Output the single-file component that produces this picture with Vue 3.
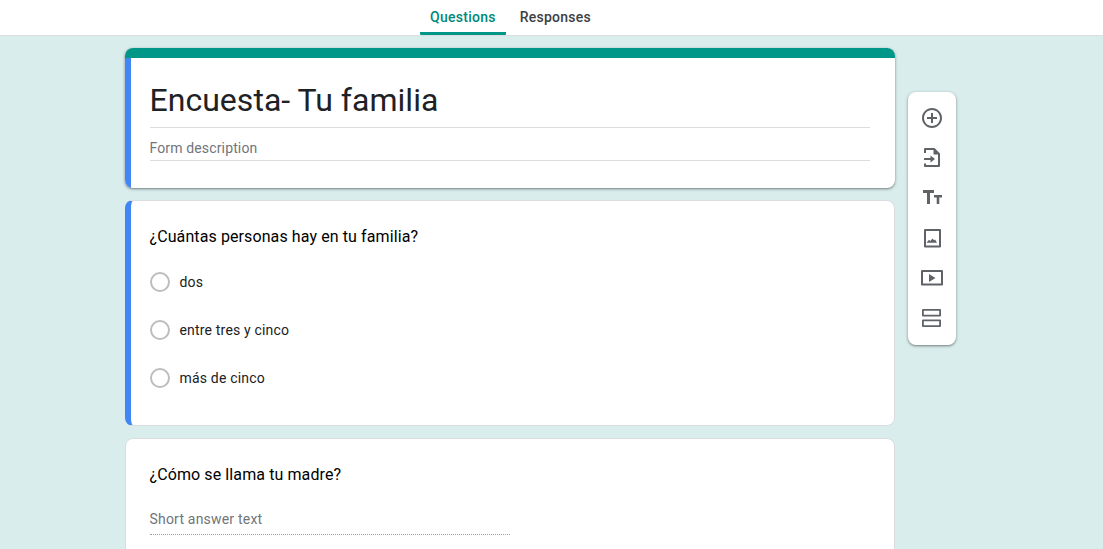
<script setup>
const options = ['dos', 'entre tres y cinco', 'más de cinco']
</script>

<template>
  <div class="page">
    <header class="tabs">
      <div class="tab active">Questions</div>
      <div class="tab">Responses</div>
    </header>
    <div class="stage">
      <main class="column">
        <section class="card title-card">
          <div class="teal"></div>
          <div class="title-body">
            <h1 class="title">Encuesta- Tu familia</h1>
            <div class="desc">Form description</div>
          </div>
        </section>
        <section class="card q-card selected">
          <div class="question">¿Cuántas personas hay en tu familia?</div>
          <div v-for="o in options" :key="o" class="option">
            <span class="radio"></span>
            <span class="label">{{ o }}</span>
          </div>
        </section>
        <section class="card q-card last">
          <div class="question">¿Cómo se llama tu madre?</div>
          <div class="short">Short answer text</div>
        </section>
      </main>
      <aside class="tools">
        <svg viewBox="0 0 24 24" class="ico"><path d="M13 7h-2v4H7v2h4v4h2v-4h4v-2h-4V7zm-1-5C6.480 2 2 6.480 2 12s4.480 10 10 10 10-4.480 10-10S17.520 2 12 2zm0 18c-4.410 0-8-3.590-8-8s3.590-8 8-8 8 3.590 8 8-3.590 8-8 8z"/></svg>
        <svg viewBox="0 0 24 24" class="ico"><path d="M5 2h9.500L20 7.500V20a1 1 0 0 1-1 1H5a1 1 0 0 1-1-1v-2.500h2V19h12V8.500h-4.500V4H6v3H4V3a1 1 0 0 1 1-1z"/><path d="M4 12h6.500V9.500l4.500 3.500-4.500 3.500V14H4z"/></svg>
        <svg viewBox="0 0 24 24" class="ico"><path d="M3 4h11v3h-4v11H7V7H3z"/><path d="M14 9h8v2.600h-2.700V18h-2.600v-6.400H14z"/></svg>
        <svg viewBox="0 0 24 24" class="ico"><path d="M5 3h15a1 1 0 0 1 1 1v16.500a1 1 0 0 1-1 1H5a1 1 0 0 1-1-1V4a1 1 0 0 1 1-1zm1 2v14.500h13V5z"/><path d="M6.500 16.800l2.500-3 1.300 1.200 2.200-2.500 1.600 1.800 1-.8 1.900 3.300z"/></svg>
        <svg viewBox="0 0 24 24" class="ico"><path d="M2 4h20a1 1 0 0 1 1 1v13.500a1 1 0 0 1-1 1H2a1 1 0 0 1-1-1V5a1 1 0 0 1 1-1zm1 2v11.500h18V6z"/><path d="M9 8l6.500 4L9 16z"/></svg>
        <svg viewBox="0 0 24 24" class="ico"><path d="M3 3h17a1 1 0 0 1 1 1v5.500a1 1 0 0 1-1 1H3a1 1 0 0 1-1-1V4a1 1 0 0 1 1-1zm.8 1.800v4h15.400v-4zM3 13.500h17a1 1 0 0 1 1 1V20a1 1 0 0 1-1 1H3a1 1 0 0 1-1-1v-5.500a1 1 0 0 1 1-1zm.8 1.800v4h15.400v-4z"/></svg>
      </aside>
    </div>
  </div>
</template>

<style>
html, body { margin: 0; background: #d9eeec; overflow: hidden; }
</style>

<style scoped>
.page {
  width: 1103px;
  height: 549px;
  overflow: hidden;
  background: #d9eeec;
  font-family: Roboto, "Liberation Sans", sans-serif;
}
.tabs {
  height: 35px;
  background: #fff;
  border-bottom: 1px solid #dadce0;
  display: flex;
  justify-content: center;
  padding-right: 78px;
}
.tab {
  height: 35px;
  box-sizing: border-box;
  padding: 9px 10px 0;
  margin-right: 4px;
  font-size: 14px;
  line-height: 17px;
  font-weight: 500;
  color: #3c4043;
  letter-spacing: 0.25px;
}
.tab.active {
  color: #00897b;
  border-bottom: 3px solid #009688;
  border-radius: 0 0 1px 1px;
}
.stage {
  display: flex;
  align-items: flex-start;
  gap: 13px;
  padding: 12px 0 0 125px;
}
.column {
  width: 770px;
  display: flex;
  flex-direction: column;
  gap: 12px;
}
.card {
  background: #fff;
  border-radius: 8px;
  box-sizing: border-box;
  overflow: hidden;
}
.title-card {
  height: 140px;
  box-shadow: 0 1px 2px rgba(60, 64, 67, .5), 0 1px 3px 1px rgba(60, 64, 67, .15);
}
.teal { height: 10px; background: #009688; }
.title-body {
  height: 130px;
  box-sizing: border-box;
  border-left: 6px solid #4285f4;
  padding: 22px 25px 0 19px;
}
.title {
  margin: 0;
  font-size: 32px;
  line-height: 40px;
  font-weight: 400;
  color: #202124;
  padding-bottom: 7px;
  text-indent: -0.5px;
  letter-spacing: 0.03px;
  border-bottom: 1px solid #dadce0;
}
.desc {
  font-size: 14px;
  line-height: 20px;
  padding-top: 10px;
  padding-bottom: 2px;
  color: #70757a;
  letter-spacing: 0.14px;
  text-indent: -0.5px;
  border-bottom: 1px solid #dadce0;
}
.q-card {
  padding: 24px 24px 0;
  border: 1px solid #dadce0;
}
.q-card.selected {
  height: 226px;
  border-left: 6px solid #4285f4;
  padding-left: 18.500px;
}
.q-card.last { height: 140px; padding-left: 23.500px; }
.question {
  font-size: 16px;
  line-height: 24px;
  color: #000;
  letter-spacing: 0.1px;
  margin-bottom: 9px;
}
.option {
  height: 48px;
  display: flex;
  align-items: center;
  gap: 10px;
}
.radio {
  width: 20px;
  height: 20px;
  box-sizing: border-box;
  border: 2px solid #bdbdbd;
  border-radius: 50%;
}
.label {
  font-size: 14px;
  color: #202124;
  letter-spacing: 0.18px;
}
.short {
  margin-top: 22px;
  width: 360px;
  height: 26px;
  box-sizing: border-box;
  font-size: 14px;
  line-height: 20px;
  color: #70757a;
  letter-spacing: 0.2px;
  border-bottom: 1px dotted #9aa0a6;
}
.tools {
  width: 48px;
  height: 253px;
  margin-top: 44px;
  background: #fff;
  border-radius: 8px;
  box-shadow: 0 1px 2px rgba(60, 64, 67, .5), 0 1px 3px 1px rgba(60, 64, 67, .15);
  display: flex;
  flex-direction: column;
  align-items: center;
  padding-top: 14px;
  box-sizing: border-box;
  gap: 16px;
}
.ico { width: 24px; height: 24px; fill: #5f6368; display: block; }
</style>
